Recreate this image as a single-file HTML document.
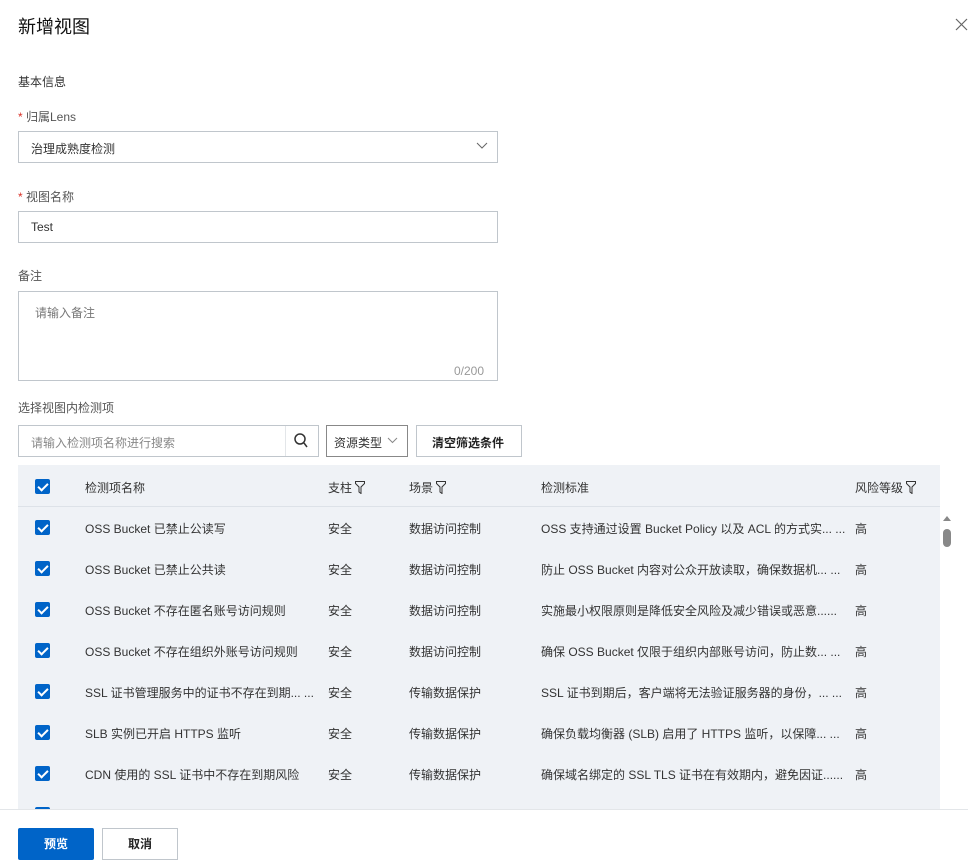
<!DOCTYPE html><html><head><meta charset="utf-8"><style>
*{box-sizing:border-box;margin:0;padding:0}
body{width:968px;height:867px;background:#fff;font-family:"Liberation Sans","Noto Sans CJK SC",sans-serif;color:#333;font-size:12px;position:relative;overflow:hidden}
.a{position:absolute;white-space:nowrap}
.box{position:absolute;border:1px solid #c0c6cc;background:#fff}
.cb{position:absolute;width:15px;height:15px;background:#0064c8;border-radius:2px}
.cb:after{content:"";position:absolute;left:5px;top:2px;width:4px;height:8px;border:solid #fff;border-width:0 2px 2px 0;transform:rotate(45deg)}
.lbl{font-size:12px;color:#555}
.req{color:#d93026}
.f{display:inline-block;vertical-align:-2px;margin-left:3px}
</style></head><body>
<div class="a" style="left:18px;top:13px;font-size:18px;color:#111">新增视图</div>
<svg class="a" style="left:955px;top:18px" width="13" height="13"><path d="M1 1L12 12M12 1L1 12" stroke="#666" stroke-width="1.2"/></svg>
<div class="a lbl" style="left:18px;top:73px;color:#333">基本信息</div>
<div class="a lbl" style="left:18px;top:108px"><span class="req">*</span> 归属Lens</div>
<div class="box" style="left:18px;top:131px;width:480px;height:32px"></div>
<div class="a" style="left:31px;top:140px">治理成熟度检测</div>
<svg class="a" style="left:476px;top:142px" width="12" height="8"><path d="M1 1L6 6L11 1" stroke="#666" fill="none"/></svg>
<div class="a lbl" style="left:18px;top:188px"><span class="req">*</span> 视图名称</div>
<div class="box" style="left:18px;top:211px;width:480px;height:32px"></div>
<div class="a" style="left:31px;top:220px">Test</div>
<div class="a lbl" style="left:18px;top:267px">备注</div>
<div class="box" style="left:18px;top:291px;width:480px;height:90px"></div>
<div class="a" style="left:35px;top:304px;color:#777">请输入备注</div>
<div class="a" style="left:454px;top:364px;color:#999">0/200</div>
<div class="a lbl" style="left:18px;top:399px">选择视图内检测项</div>
<div class="box" style="left:18px;top:425px;width:301px;height:32px"></div>
<div class="a" style="left:31px;top:434px;color:#888">请输入检测项名称进行搜索</div>
<div class="a" style="left:285px;top:426px;width:1px;height:30px;background:#e3e6e9"></div>
<svg class="a" style="left:294px;top:433px" width="14" height="15"><circle cx="6" cy="6" r="5" stroke="#333" stroke-width="1.5" fill="none"/><path d="M10 10L13 14" stroke="#333" stroke-width="1.5"/></svg>
<div class="box" style="left:326px;top:425px;width:82px;height:32px;border-color:#888"></div>
<div class="a" style="left:334px;top:434px">资源类型</div>
<svg class="a" style="left:387px;top:437px" width="11" height="7"><path d="M1 1L5.5 5.5L10 1" stroke="#888" fill="none"/></svg>
<div class="box" style="left:416px;top:425px;width:106px;height:32px"></div>
<div class="a" style="left:432px;top:434px;font-weight:bold;color:#222">清空筛选条件</div>
<div class="a" style="left:18px;top:465px;width:922px;height:345px;background:#eff2f6"></div>
<div class="a" style="left:18px;top:506px;width:922px;height:1px;background:#dde2e8"></div>
<div class="cb" style="left:35px;top:479px"></div>
<div class="a" style="left:85px;top:479px">检测项名称</div>
<div class="a" style="left:328px;top:479px">支柱<svg class="f" width="10" height="13"><path d="M0.5 0.5H9.5V2.5L6 6V12.5L4 11V6L0.5 2.5Z" stroke="#333" fill="none"/></svg></div>
<div class="a" style="left:409px;top:479px">场景<svg class="f" width="10" height="13"><path d="M0.5 0.5H9.5V2.5L6 6V12.5L4 11V6L0.5 2.5Z" stroke="#333" fill="none"/></svg></div>
<div class="a" style="left:541px;top:479px">检测标准</div>
<div class="a" style="left:855px;top:479px">风险等级<svg class="f" width="10" height="13"><path d="M0.5 0.5H9.5V2.5L6 6V12.5L4 11V6L0.5 2.5Z" stroke="#333" fill="none"/></svg></div>
<div class="a" style="left:940px;top:507px;width:15px;height:303px;background:#fff"></div>
<svg class="a" style="left:943px;top:516px" width="8" height="6"><path d="M0 5L4 0L8 5Z" fill="#888"/></svg>
<div class="a" style="left:943px;top:529px;width:8px;height:18px;border-radius:4px;background:#888"></div>
<div id="rows"></div>
<div class="a" style="left:0;top:809px;width:968px;height:58px;background:#fff;border-top:1px solid #e3e6e9"></div>
<div class="a" style="left:18px;top:828px;width:76px;height:32px;background:#0064c8;border-radius:2px;color:#fff;text-align:center;line-height:32px;font-weight:bold">预览</div>
<div class="a" style="left:102px;top:828px;width:76px;height:32px;border:1px solid #c0c6cc;text-align:center;line-height:30px;font-weight:bold;color:#222">取消</div>
<script>
var d=[["OSS Bucket 已禁止公读写","数据访问控制","OSS 支持通过设置 Bucket Policy 以及 ACL 的方式实... ..."],
["OSS Bucket 已禁止公共读","数据访问控制","防止 OSS Bucket 内容对公众开放读取，确保数据机... ..."],
["OSS Bucket 不存在匿名账号访问规则","数据访问控制","实施最小权限原则是降低安全风险及减少错误或恶意......"],
["OSS Bucket 不存在组织外账号访问规则","数据访问控制","确保 OSS Bucket 仅限于组织内部账号访问，防止数... ..."],
["SSL 证书管理服务中的证书不存在到期... ...","传输数据保护","SSL 证书到期后，客户端将无法验证服务器的身份，... ..."],
["SLB 实例已开启 HTTPS 监听","传输数据保护","确保负载均衡器 (SLB) 启用了 HTTPS 监听，以保障... ..."],
["CDN 使用的 SSL 证书中不存在到期风险","传输数据保护","确保域名绑定的 SSL TLS 证书在有效期内，避免因证......"],["","",""]];
var h="";d.forEach(function(r,i){var y=528+41*i;
h+='<div class="cb" style="left:35px;top:'+(y-8)+'px"></div>';
if(r[0])h+='<div class="a" style="left:85px;top:'+(y-8)+'px">'+r[0]+'</div><div class="a" style="left:328px;top:'+(y-8)+'px">安全</div><div class="a" style="left:409px;top:'+(y-8)+'px">'+r[1]+'</div><div class="a" style="left:541px;top:'+(y-8)+'px">'+r[2]+'</div><div class="a" style="left:855px;top:'+(y-8)+'px">高</div>';});
document.getElementById("rows").innerHTML=h;
</script>
</body></html>
